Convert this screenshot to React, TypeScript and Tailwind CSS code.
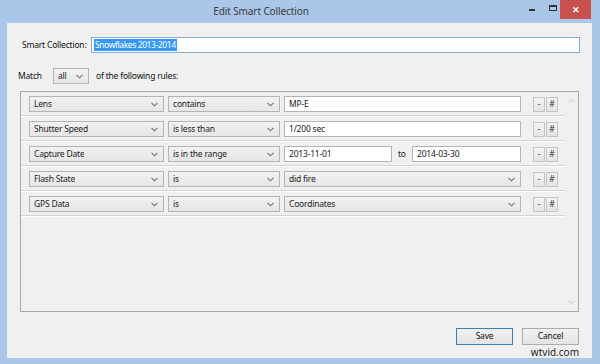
import React from 'react';

const font = { fontFamily: '"Noto Sans", "Open Sans", sans-serif' };

const Chevron = () => (
  <svg width="7" height="5" viewBox="0 0 7 5" className="shrink-0">
    <path d="M0.5 0.8 L3.5 3.8 L6.5 0.8" fill="none" stroke="#707070" strokeWidth="1.1" />
  </svg>
);

const Select = ({ label, className }: { label: string; className: string }) => (
  <div
    className={`h-[16px] flex items-center justify-between pl-[4px] pr-[5px] border border-[#b4b4b4] bg-gradient-to-b from-[#f2f2f2] to-[#e6e6e6] text-[#222] ${className}`}
  >
    <span className="truncate">{label}</span>
    <Chevron />
  </div>
);

const TextBox = ({ value, className }: { value: string; className: string }) => (
  <div
    className={`h-[16px] flex items-center pl-[4px] border border-[#b4b4b4] bg-white text-[#222] ${className}`}
  >
    {value}
  </div>
);

const SmallButton = ({ label }: { label: string }) => (
  <div className="w-[12px] h-[15px] flex items-center justify-center border border-[#c4c4c4] bg-gradient-to-b from-[#f4f4f4] to-[#e4e4e4] text-[#333]">
    {label}
  </div>
);

type Rule = {
  field: string;
  op: string;
  kind: 'text' | 'range' | 'select';
  value: string;
  value2?: string;
};

const rules: Rule[] = [
  { field: 'Lens', op: 'contains', kind: 'text', value: 'MP-E' },
  { field: 'Shutter Speed', op: 'is less than', kind: 'text', value: '1/200 sec' },
  { field: 'Capture Date', op: 'is in the range', kind: 'range', value: '2013-11-01', value2: '2014-03-30' },
  { field: 'Flash State', op: 'is', kind: 'select', value: 'did fire' },
  { field: 'GPS Data', op: 'is', kind: 'select', value: 'Coordinates' },
];

const RuleRow = ({ rule }: { rule: Rule }) => (
  <div className="border-b border-[#d3d3d3] shadow-[0_1px_0_#ffffff] mb-[1px]">
    <div className="flex items-center pt-[4px] pb-[3px] pl-[8px]">
      <Select label={rule.field} className="w-[135px]" />
      <Select label={rule.op} className="w-[112px] ml-[4px]" />
      {rule.kind === 'text' && <TextBox value={rule.value} className="w-[237px] ml-[4px]" />}
      {rule.kind === 'select' && <Select label={rule.value} className="w-[237px] ml-[4px]" />}
      {rule.kind === 'range' && (
        <div className="flex items-center w-[237px] ml-[4px]">
          <TextBox value={rule.value} className="w-[108px]" />
          <span className="text-[#222] w-[20px] pl-[6px]">to</span>
          <TextBox value={rule.value2 ?? ''} className="w-[109px]" />
        </div>
      )}
      <div className="flex ml-[12px] gap-[1px]">
        <SmallButton label="-" />
        <SmallButton label="#" />
      </div>
    </div>
  </div>
);

const App: React.FC = () => {
  return (
    <div style={font} className="w-[600px] h-[364px] bg-[#aac7ea] flex flex-col overflow-hidden">
      {/* title bar */}
      <div className="h-[23px] flex shrink-0">
        <div className="flex-1 text-center text-[10px] tracking-[-0.1px] leading-[23px] text-[#3a3a3a]">Edit Smart Collection</div>
        <div className="w-[78px] flex items-start">
          <div className="w-[10px] h-[18px] ml-[7px] flex items-end pb-[7px]">
            <div className="w-[6px] h-[2px] bg-[#333]" />
          </div>
          <div className="w-[10px] h-[18px] ml-[10px] flex items-start pt-[5px]">
            <div className="w-[8px] h-[6px] border border-[#333] border-t-2" />
          </div>
          <div className="w-[31px] h-[19px] ml-[1px] bg-[#c9504c] flex items-center justify-center text-white text-[9px] font-bold">
            ✕
          </div>
        </div>
      </div>

      {/* client area */}
      <div className="flex-1 ml-[7px] mr-[8px] mb-[7px] bg-[#f0f0f0] flex flex-col px-[13px] text-[8.5px] tracking-[-0.2px] text-[#111]">
        <div className="flex items-center mt-[14px] h-[16px]">
          <span className="ml-[2px] w-[69px] whitespace-nowrap">Smart Collection:</span>
          <div className="flex-1 h-[16px] mr-[-1px] border border-[#8aaad6] bg-white flex items-center pl-[2px]">
            <span className="bg-[#3399ff] text-white px-[1px] leading-[12px] tracking-[-0.4px]">Snowflakes 2013-2014</span>
          </div>
        </div>

        <div className="flex items-center mt-[15px] h-[16px]">
          <span className="ml-[-2px] w-[35px]">Match</span>
          <Select label="all" className="w-[36px]" />
          <span className="ml-[7px]">of the following rules:</span>
        </div>

        <div className="mt-[7px] h-[221px] border border-[#a9a9a9] flex">
          <div className="flex-1 flex flex-col">
            {rules.map((r) => (
              <RuleRow key={r.field} rule={r} />
            ))}
          </div>
          <div className="w-[13px] flex flex-col justify-between items-center py-[6px]">
            <svg width="7" height="5" viewBox="0 0 7 5">
              <path d="M0.5 4.2 L3.5 1.2 L6.5 4.2" fill="none" stroke="#c4c4c4" strokeWidth="1" />
            </svg>
            <svg width="7" height="5" viewBox="0 0 7 5">
              <path d="M0.5 0.8 L3.5 3.8 L6.5 0.8" fill="none" stroke="#c4c4c4" strokeWidth="1" />
            </svg>
          </div>
        </div>

        <div className="flex justify-end mt-[16px] gap-[9px]">
          <div className="w-[57px] h-[17px] border border-[#3c7fb1] bg-gradient-to-b from-[#f2f2f2] to-[#e3e3e3] flex items-center justify-center">
            Save
          </div>
          <div className="w-[57px] h-[17px] border border-[#acacac] bg-gradient-to-b from-[#f2f2f2] to-[#e3e3e3] flex items-center justify-center">
            Cancel
          </div>
        </div>
        <div className="flex justify-end mt-[1px] text-[10px] tracking-normal leading-[12px] text-[#222]">wtvid.com</div>
      </div>
    </div>
  );
};

export default App;
